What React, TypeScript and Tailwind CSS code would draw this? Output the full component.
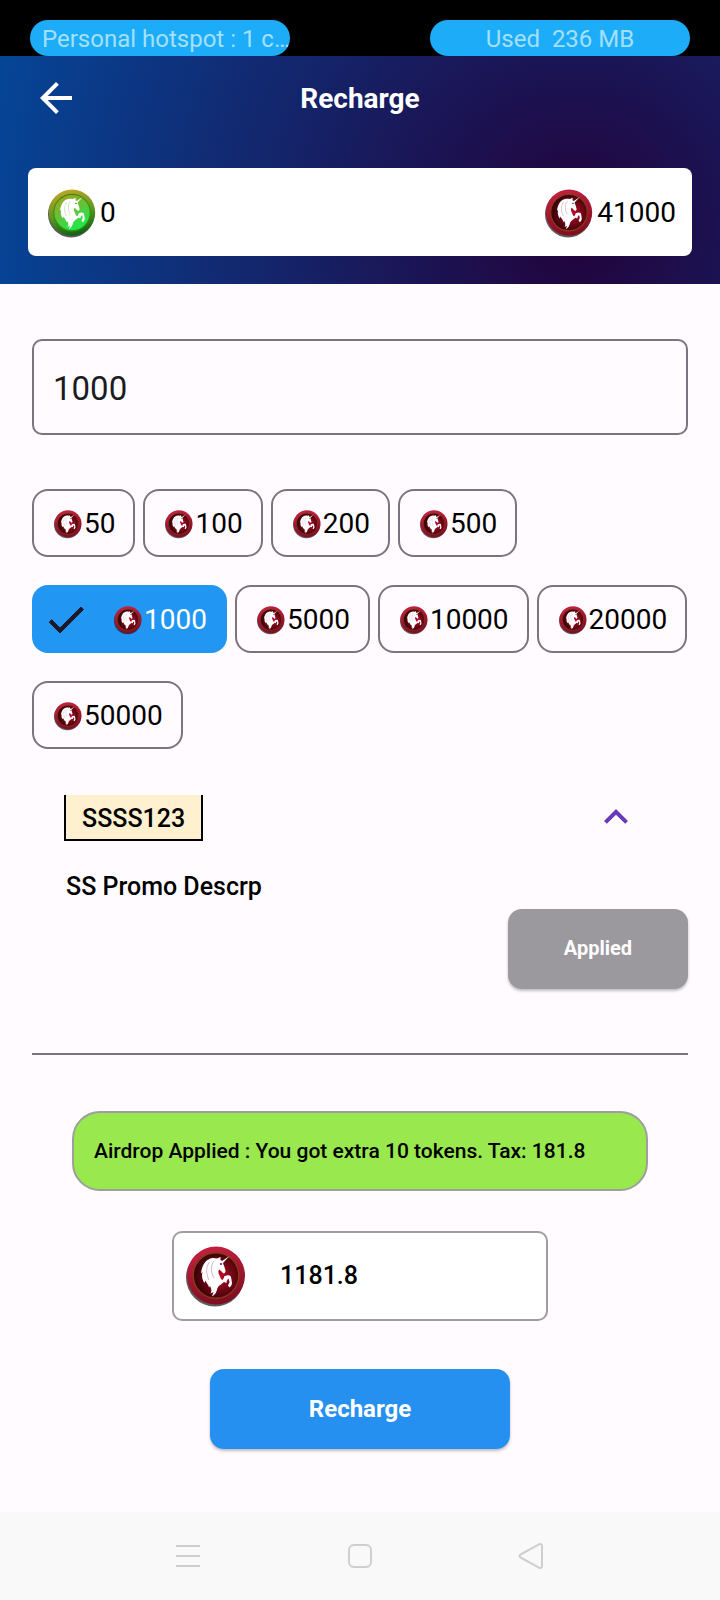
import { useId, useState } from "react";

type CoinProps = { tone: "red" | "green"; className: string };

function Coin({ tone, className }: CoinProps) {
  const id = useId();
  const red = tone === "red";
  return (
    <svg viewBox="0 0 60 60" className={`shrink-0 overflow-visible ${className}`} aria-hidden="true">
      <defs>
        <linearGradient id={`${id}rim`} x1="0.35" y1="0" x2="0.6" y2="1">
          <stop offset="0" stopColor={red ? "#c4213f" : "#c2a426"} />
          <stop offset="0.5" stopColor={red ? "#9f1730" : "#5f9a1c"} />
          <stop offset="1" stopColor={red ? "#7d0d22" : "#0a6216"} />
        </linearGradient>
        {red ? (
          <radialGradient id={`${id}face`} cx="0.58" cy="0.52" r="0.52">
            <stop offset="0" stopColor="#c80a2c" />
            <stop offset="0.5" stopColor="#7a0618" />
            <stop offset="1" stopColor="#3c0408" />
          </radialGradient>
        ) : (
          <linearGradient id={`${id}face`} x1="0.2" y1="0" x2="0.7" y2="1">
            <stop offset="0" stopColor="#a8a020" />
            <stop offset="0.5" stopColor="#5cc63a" />
            <stop offset="1" stopColor="#14f04c" />
          </linearGradient>
        )}
      </defs>
      <circle cx="29" cy="31.5" r="29" fill="#1a1414" opacity="0.7" />
      <circle cx="30" cy="29.5" r="29" fill={`url(#${id}rim)`} />
      <circle cx="30" cy="29.5" r="22.8" fill={`url(#${id}face)`} stroke={red ? "#8a3a14" : "#3c8c12"} strokeWidth="1.4" />
      <path
        fill="#fff"
        d="M43.500 10 L37 17 C37.500 19 38.500 20.500 39 23 C40 25 39.500 27 38 27.500 C36.500 27 35 25 33.500 23.500 C32 24.500 32 27 33.500 29.500 C34.500 32 35 33.500 36.500 34 C37.500 32.500 38.500 31.500 38 30.500 C40 29.500 42.500 28.500 44.500 30 C45.500 32 45.500 34.500 46 36.500 C46 38.500 45 40.500 43.500 41.500 L42 39.500 L43.500 36 L42.500 32.500 C41.500 33.500 40.500 35 40.500 37 L38 36 C36 38 33 39 31.500 42 C30.500 45.500 30 48 26 50.500 L27.500 46 L24.500 47.500 C26 45 25.500 42.500 24 40 L23 41.500 C22.500 38.500 20.500 37.500 19.500 34.500 L18.500 37 C16 33.500 15.500 29.500 16.500 26 L15 27.500 C15.500 22 18 15.500 22.500 13.500 C25.500 11.500 29 12 31 12.500 L34.500 11 L34.500 14 L36 15 Z"
      />
      <path d="M28 15 C24 20 25 27 28 32 M23.500 16 C19.500 21 20 28 23 34" fill="none" stroke={red ? "#c49aa4" : "#a8d498"} strokeWidth="0.7" />
      <circle cx="35" cy="18" r="0.9" fill={red ? "#3c0408" : "#25601a"} />
    </svg>
  );
}

const AMOUNTS = [50, 100, 200, 500, 1000, 5000, 10000, 20000, 50000];

export default function App() {
  const [amount, setAmount] = useState("1000");

  return (
    <div className="flex min-h-screen flex-col bg-[#fffbff] font-['Roboto',sans-serif] text-black">
      <div className="flex h-14 items-end justify-between bg-black px-[30px] text-2xl text-[#a4e0fd]">
        <div className="h-9 w-[260px] overflow-hidden rounded-full bg-[#1dacf7] pt-px pl-3 leading-9 whitespace-nowrap">
          Personal hotspot : 1 c…
        </div>
        <div className="h-9 w-[260px] rounded-full bg-[#1dacf7] pt-px text-center leading-9 whitespace-pre">
          Used  236 MB
        </div>
      </div>

      <header className="bg-[radial-gradient(circle_590px_at_80%_75%,#23023b,#064496)] px-7 pb-7">
        <div className="grid h-28 grid-cols-[48px_1fr_48px] items-start pt-[18px]">
          <button type="button" aria-label="Back" className="ml-1 size-12 text-white">
            <svg viewBox="0 0 24 24" fill="currentColor" className="size-12">
              <path d="M20 11H7.830l5.590-5.590L12 4l-8 8 8 8 1.410-1.410L7.830 13H20v-2z" />
            </svg>
          </button>
          <h1 className="pt-px text-center text-[28px] leading-12 font-bold text-white">Recharge</h1>
        </div>
        <div className="flex h-[88px] items-center justify-between rounded-lg bg-white pt-0.5 pr-4 pl-5 text-[28px]">
          <div className="flex items-center gap-1">
            <Coin tone="green" className="size-12" />
            <span>0</span>
          </div>
          <div className="flex items-center gap-1">
            <Coin tone="red" className="size-12" />
            <span>41000</span>
          </div>
        </div>
      </header>

      <main className="flex flex-1 flex-col px-8 pt-[55px] pb-[63px]">
        <input
          aria-label="Amount"
          inputMode="numeric"
          value={amount}
          onChange={(e) => setAmount(e.target.value)}
          className="h-24 w-full rounded-[10px] border-2 border-[#79747e] bg-transparent px-[19px] pt-0.5 text-[33px] text-[#1c1b1f] outline-none"
        />

        <div className="mt-[54px] flex flex-wrap gap-x-2 gap-y-7">
          {AMOUNTS.map((value) => {
            const selected = amount === String(value);
            return (
              <button
                key={value}
                type="button"
                aria-pressed={selected}
                onClick={() => setAmount(String(value))}
                className={`flex h-[68px] items-center rounded-2xl border-2 pt-0.5 pr-[18px] text-[28px] ${
                  selected
                    ? "border-[#2196f3] bg-[#2196f3] pl-2 text-white"
                    : "border-[#79747e] bg-transparent pl-5"
                }`}
              >
                {selected && (
                  <svg viewBox="0 0 24 24" fill="#1d192b" stroke="#1d192b" strokeWidth="0.5" className="mr-6 size-12" aria-hidden="true">
                    <path d="M9 16L4.830 11.830l-1.220 1.300L9 18.500 20.700 6.800l-1.200-1.300z" />
                  </svg>
                )}
                <Coin tone="red" className="mr-0.5 size-7" />
                {value}
              </button>
            );
          })}
        </div>

        <div className="mt-[46px] flex items-start justify-between px-8 pr-12">
          <div className="h-[46px] border-x-2 border-b-2 border-black bg-[#fff0cf] px-4 text-[25px] leading-12 font-medium">
            SSSS123
          </div>
          <button type="button" aria-label="Hide promo details" className="flex h-11 items-center text-[#673ab7]">
            <svg viewBox="0 0 24 24" fill="currentColor" className="size-12">
              <path d="M12 8l-6 6 1.410 1.410L12 10.830l4.590 4.580L18 14z" />
            </svg>
          </button>
        </div>
        <p className="mt-[30px] px-[34px] text-[25px] leading-8 font-medium">SS Promo Descrp</p>
        <button
          type="button"
          className="mt-1.5 h-20 w-[180px] self-end rounded-[14px] bg-[#9b989e] pb-0.5 text-xl font-bold text-white shadow-[0_2px_3px_rgba(0,0,0,0.25)]"
        >
          Applied
        </button>

        <hr className="mt-16 border-t-2 border-[#79747e]" />

        <p className="mx-10 mt-14 flex h-20 items-center rounded-[28px] border-2 border-[#9e9e9e] bg-[#99e94e] px-5 pt-0.5 text-[21px] font-medium whitespace-nowrap">
          Airdrop Applied : You got extra 10 tokens. Tax: 181.8
        </p>

        <div className="mt-10 flex h-[90px] w-[376px] items-center gap-[34px] self-center rounded-[10px] border-2 border-[#9e9e9e] bg-white px-3 text-[25px] font-medium">
          <Coin tone="red" className="size-[60px]" />
          <span>1181.8</span>
        </div>

        <button
          type="button"
          className="mt-12 h-20 w-[300px] self-center rounded-[14px] bg-[#2590f0] text-2xl font-bold text-white shadow-[0_2px_3px_rgba(0,0,0,0.25)]"
        >
          Recharge
        </button>
      </main>

      <nav className="flex h-[88px] items-center justify-center gap-36 bg-[#f9f9f9] text-[#cfcfcf]">
        <button type="button" aria-label="Recent apps">
          <svg viewBox="0 0 28 28" className="size-7" fill="none" stroke="currentColor" strokeWidth="2">
            <path d="M2 4h24M2 14h24M2 24h24" />
          </svg>
        </button>
        <button type="button" aria-label="Home">
          <svg viewBox="0 0 28 28" className="size-7" fill="none" stroke="currentColor" strokeWidth="2">
            <rect x="3" y="3" width="22" height="22" rx="5" />
          </svg>
        </button>
        <button type="button" aria-label="Back to previous screen">
          <svg viewBox="0 0 28 28" className="size-7" fill="none" stroke="currentColor" strokeWidth="2" strokeLinejoin="round">
            <path d="M2.500 12.500 L21 2.300 Q24 1.500 24 4 V24 Q24 26.500 21 25.700 L2.500 15.500 Q0.500 14 2.500 12.500 Z" />
          </svg>
        </button>
      </nav>
    </div>
  );
}
